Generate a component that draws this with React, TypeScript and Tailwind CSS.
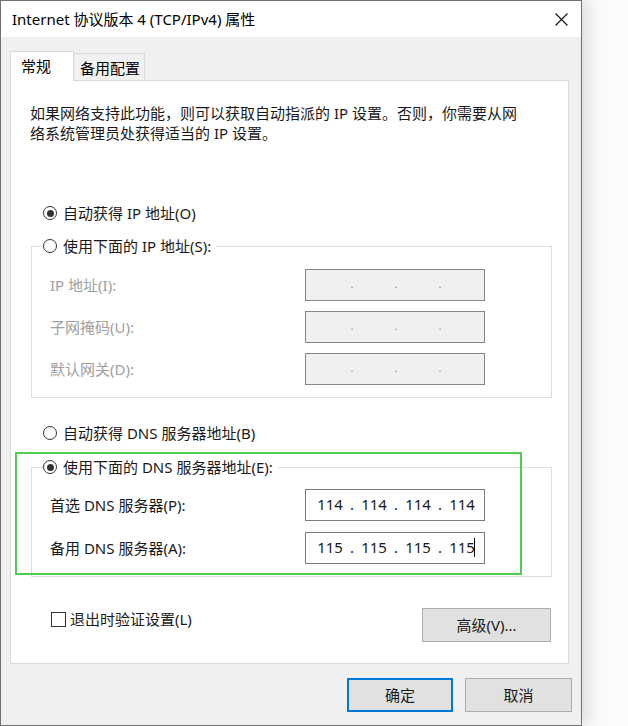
import React, { Fragment } from "react";

function Radio({ checked }: { checked?: boolean }) {
  return (
    <span className="w-[14px] h-[14px] rounded-full border-[1.5px] border-[#333333] bg-white flex items-center justify-center shrink-0">
      {checked && <span className="w-[7px] h-[7px] rounded-full bg-[#333333]" />}
    </span>
  );
}

function IpField({
  values,
  disabled,
  caret,
}: {
  values?: string[];
  disabled?: boolean;
  caret?: boolean;
}) {
  return (
    <div
      className={`w-[180px] h-[32px] border flex items-center pl-[11px] pb-[2px] text-[15px] leading-[20px] ${
        disabled ? "bg-[#f0f0f0] border-[#858585]" : "bg-white border-[#7a7a7a]"
      }`}
    >
      {[0, 1, 2, 3].map((i) => (
        <Fragment key={i}>
          {i > 0 && (
            <span
              className={`w-[18px] text-center ${
                disabled ? "text-[#8a8a8a] text-[11px]" : "text-[#1a1a1a]"
              }`}
            >
              .
            </span>
          )}
          <span className="w-[26px] text-center text-[#1a1a1a]">{values ? values[i] : ""}</span>
        </Fragment>
      ))}
      {caret && <span className="w-[1px] h-[19px] bg-black -ml-[1px]" />}
    </div>
  );
}

function FieldRow({
  label,
  disabled,
  values,
  caret,
}: {
  label: string;
  disabled?: boolean;
  values?: string[];
  caret?: boolean;
}) {
  return (
    <div className="flex items-center pl-[7px]">
      <span
        className={`w-[255px] leading-[20px] ${disabled ? "text-[#a0a0a0]" : "text-[#1a1a1a]"}`}
      >
        {label}
      </span>
      <IpField values={values} disabled={disabled} caret={caret} />
    </div>
  );
}

function Button({
  children,
  primary,
  className = "",
}: {
  children: React.ReactNode;
  primary?: boolean;
  className?: string;
}) {
  return (
    <div
      className={`h-[34px] bg-[#e1e1e1] flex items-center justify-center text-[15px] text-[#1a1a1a] ${
        primary ? "border-2 border-[#0078d7]" : "border border-[#adadad]"
      } ${className}`}
    >
      {children}
    </div>
  );
}

export default function App() {
  return (
    <div className="relative w-[628px] h-[726px] bg-[#fbfbfb] overflow-hidden font-['Noto_Sans','Noto_Sans_CJK_SC',sans-serif] text-[15px] text-[#1a1a1a]">
      <div className="w-[582px] h-[726px] border border-[#707070] bg-[#f0f0f0] flex flex-col shadow-[6px_0_16px_rgba(0,0,0,0.13)]">
        {/* Title bar */}
        <div className="h-[36px] bg-white flex items-center justify-between pl-[11px] pr-[13px] shrink-0">
          <span className="leading-[20px] text-black">Internet 协议版本 4 (TCP/IPv4) 属性</span>
          <svg width="13" height="13" viewBox="0 0 13 13">
            <path d="M0.5 0.5 L12.5 12.5 M12.5 0.5 L0.5 12.5" stroke="#111" strokeWidth="1.1" />
          </svg>
        </div>

        {/* Tabs */}
        <div className="flex items-end ml-[9px] mt-[14px] -mb-px">
          <div className="relative z-10 w-[64px] h-[30px] bg-white border-l border-t border-r border-[#d9d9d9] pl-[10px] pt-[4px] leading-[20px] text-black">
            常规
          </div>
          <div className="w-[71px] h-[28px] bg-[#f0f0f0] border-t border-r border-[#d9d9d9] pl-[6px] pt-[4px] leading-[20px] text-black">
            备用配置
          </div>
        </div>

        {/* Panel */}
        <div className="ml-[9px] w-[559px] h-[584px] bg-white border border-[#d9d9d9] flex flex-col">
          <p className="mt-[22px] ml-[19px] leading-[20px] text-[#1a1a1a]">
            如果网络支持此功能，则可以获取自动指派的 IP 设置。否则，你需要从网
            <br />
            络系统管理员处获得适当的 IP 设置。
          </p>

          <div className="mt-[60px] ml-[32px] h-[20px] flex items-center gap-[6px]">
            <Radio checked />
            <span className="leading-[20px]">自动获得 IP 地址(O)</span>
          </div>

          <fieldset className="mt-[13px] ml-[20px] w-[521px] border border-[#dedede] px-[11px]">
            <legend className="pr-[5px]">
              <span className="h-[20px] flex items-center gap-[6px]">
                <Radio />
                <span className="leading-[20px]">使用下面的 IP 地址(S):</span>
              </span>
            </legend>
            <div className="pt-[13px] pb-[12px] flex flex-col gap-[10px]">
              <FieldRow label="IP 地址(I):" disabled />
              <FieldRow label="子网掩码(U):" disabled />
              <FieldRow label="默认网关(D):" disabled />
            </div>
          </fieldset>

          <div className="mt-[25px] ml-[32px] h-[20px] flex items-center gap-[6px]">
            <Radio />
            <span className="leading-[20px]">自动获得 DNS 服务器地址(B)</span>
          </div>

          <fieldset className="mt-[14px] ml-[20px] w-[521px] border border-[#dedede] px-[11px]">
            <legend className="pr-[5px]">
              <span className="h-[20px] flex items-center gap-[6px]">
                <Radio checked />
                <span className="leading-[20px]">使用下面的 DNS 服务器地址(E):</span>
              </span>
            </legend>
            <div className="pt-[12px] pb-[12px] flex flex-col gap-[11px]">
              <FieldRow label="首选 DNS 服务器(P):" values={["114", "114", "114", "114"]} />
              <FieldRow label="备用 DNS 服务器(A):" values={["115", "115", "115", "115"]} caret />
            </div>
          </fieldset>

          <div className="mt-[31px] pl-[40px] pr-[17px] flex items-start justify-between">
            <div className="mt-[1px] h-[20px] flex items-center gap-[4px]">
              <span className="w-[15px] h-[15px] border border-[#333333] bg-white shrink-0" />
              <span className="leading-[20px]">退出时验证设置(L)</span>
            </div>
            <Button className="w-[129px]">高级(V)...</Button>
          </div>
        </div>

        {/* Bottom buttons */}
        <div className="mt-[14px] pr-[9px] flex justify-end gap-[12px]">
          <Button primary className="w-[106px]">
            确定
          </Button>
          <Button className="w-[107px]">取消</Button>
        </div>
      </div>

      {/* Green highlight annotation */}
      <div className="absolute left-[15px] top-[452px] w-[507px] h-[123px] border-2 border-[#4fcf4f] pointer-events-none" />
    </div>
  );
}
